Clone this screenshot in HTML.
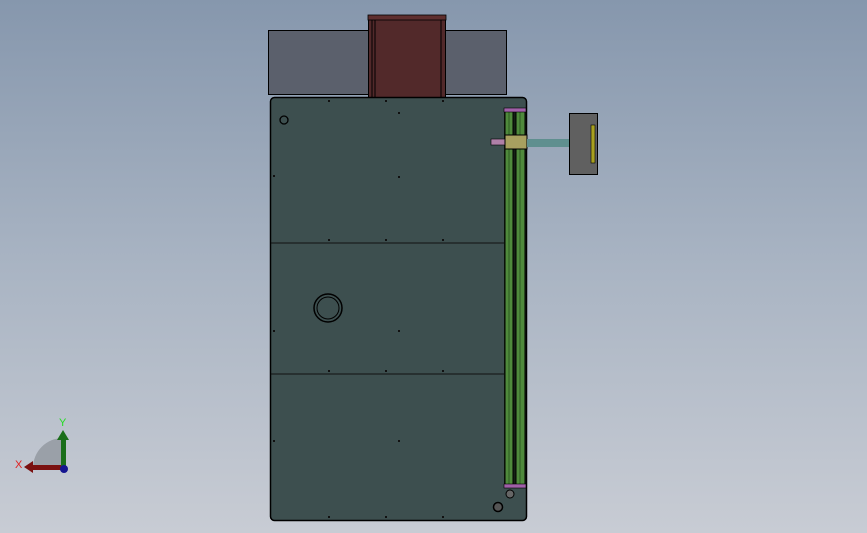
<!DOCTYPE html><html><head><style>html,body{margin:0;padding:0}body{width:867px;height:533px;overflow:hidden;background:linear-gradient(#8697ad,#a9b4c3 50%,#c8ccd4)}</style></head><body>
<svg width="867" height="533" style="position:absolute;left:0;top:0" font-family="Liberation Sans, sans-serif">
<rect x="268.5" y="30.5" width="238" height="64" fill="#5b606c" stroke="#000"/>
<rect x="368.5" y="15.5" width="77" height="83" fill="#52292a" stroke="#000"/>
<rect x="368" y="15" width="78" height="5" fill="#5e2e2e" stroke="#000" stroke-width="0.8"/>
<line x1="372" y1="20" x2="372" y2="98" stroke="#000"/><line x1="375" y1="20" x2="375" y2="98" stroke="#000"/>
<line x1="441" y1="20" x2="441" y2="98" stroke="#000"/>
<rect x="270.5" y="97.5" width="256" height="423" rx="4" fill="#3d4f4f" stroke="#000" stroke-width="1.5"/>
<line x1="271" y1="243" x2="505" y2="243" stroke="#111"/>
<line x1="271" y1="374" x2="505" y2="374" stroke="#111"/>
<circle cx="328" cy="308" r="14" fill="#3d4f4f" stroke="#000" stroke-width="1.5"/>
<circle cx="328" cy="308" r="11" fill="#3d4f4f" stroke="#000" stroke-width="1"/>
<circle cx="284" cy="120" r="4" fill="#3d4f4f" stroke="#000" stroke-width="1.3"/>
<circle cx="498" cy="507" r="4.5" fill="#555" stroke="#000" stroke-width="1.5"/>
<circle cx="510" cy="494" r="4" fill="#666" stroke="#000"/>
<rect x="504" y="109" width="22" height="377" fill="#152015"/>
<rect x="505" y="109" width="8" height="377" fill="#4f8a3c" stroke="#000"/>
<rect x="516" y="109" width="9" height="377" fill="#4f8a3c" stroke="#000"/>
<line x1="509" y1="109" x2="509" y2="486" stroke="#2d5a22"/><line x1="520" y1="109" x2="520" y2="486" stroke="#2d5a22"/>
<rect x="504" y="108" width="22" height="4" fill="#a060a8" stroke="#000" stroke-width="0.6"/>
<rect x="504" y="484" width="22" height="4" fill="#a060a8" stroke="#000" stroke-width="0.6"/>
<rect x="491" y="139" width="14" height="6" fill="#b080a8" stroke="#000" stroke-width="0.6"/>
<rect x="505" y="135" width="22" height="14" fill="#a8a060" stroke="#000"/>
<rect x="527" y="139" width="50" height="8" fill="#5f8f8f"/>
<circle cx="580" cy="143" r="5" fill="#6fa0a0" stroke="#000"/>
<rect x="569.5" y="113.5" width="28" height="61" fill="#606060" stroke="#000"/>
<rect x="591" y="125" width="4" height="38" fill="#a8a020" stroke="#000" stroke-width="0.6"/>
<g fill="#111"><rect x="328" y="100" width="2" height="2"/><rect x="385" y="100" width="2" height="2"/><rect x="442" y="100" width="2" height="2"/><rect x="398" y="112" width="2" height="2"/><rect x="398" y="176" width="2" height="2"/><rect x="273" y="175" width="2" height="2"/><rect x="328" y="239" width="2" height="2"/><rect x="385" y="239" width="2" height="2"/><rect x="442" y="239" width="2" height="2"/><rect x="398" y="330" width="2" height="2"/><rect x="273" y="330" width="2" height="2"/><rect x="328" y="370" width="2" height="2"/><rect x="385" y="370" width="2" height="2"/><rect x="442" y="370" width="2" height="2"/><rect x="398" y="440" width="2" height="2"/><rect x="273" y="440" width="2" height="2"/><rect x="328" y="516" width="2" height="2"/><rect x="385" y="516" width="2" height="2"/><rect x="442" y="516" width="2" height="2"/></g>
<path d="M33 468 A30 30 0 0 1 63 438 L63 468 Z" fill="#9aa0a8"/>
<rect x="30" y="465" width="33" height="5" fill="#7a1010"/><polygon points="24,467 33,461 33,473" fill="#7a1010"/>
<rect x="61" y="438" width="5" height="30" fill="#1a6e1a"/><polygon points="63,430 57,440 69,440" fill="#1a6e1a"/>
<circle cx="64" cy="469" r="4" fill="#151590"/>
<text x="59" y="426" font-size="11" fill="#22dd22">Y</text><text x="15" y="468" font-size="11" fill="#e02020">X</text>
</svg></body></html>
